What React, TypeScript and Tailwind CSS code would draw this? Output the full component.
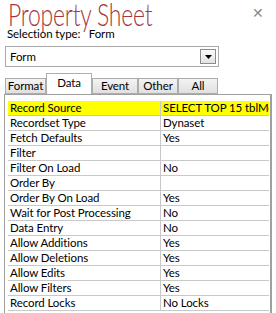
import React from "react";

const rows: [string, string][] = [
  ["Record Source", "SELECT TOP 15 tblMeta"],
  ["Recordset Type", "Dynaset"],
  ["Fetch Defaults", "Yes"],
  ["Filter", ""],
  ["Filter On Load", "No"],
  ["Order By", ""],
  ["Order By On Load", "Yes"],
  ["Wait for Post Processing", "No"],
  ["Data Entry", "No"],
  ["Allow Additions", "Yes"],
  ["Allow Deletions", "Yes"],
  ["Allow Edits", "Yes"],
  ["Allow Filters", "Yes"],
  ["Record Locks", "No Locks"],
];

const tabs = ["Format", "Data", "Event", "Other", "All"];
const tabWidths = ["w-[41px]", "w-[46px]", "w-[46px]", "w-[40px]", "w-[40px]"];

export default function App() {
  return (
    <div className="w-[276px] h-[313px] bg-white overflow-hidden relative font-['Lato',sans-serif] text-[11.5px] tracking-[-0.1px] text-black">
      {/* Header */}
      <div className="flex items-start justify-between pl-[8px] pr-[12px] h-[26px]">
        <h1 className="text-[31px] leading-[29px] font-light text-[#a4373a] tracking-[-0.3px] origin-left scale-x-[0.74] whitespace-nowrap">
          Property Sheet
        </h1>
        <span className="text-[#8a8a8a] text-[14px] leading-none mt-[6px]">✕</span>
      </div>
      <div className="pl-[7px] leading-[14px] pt-[1px]">
        Selection type:&nbsp;&nbsp;&nbsp;Form
      </div>

      {/* Dropdown */}
      <div className="ml-[5px] mt-[5px] w-[214px] h-[21px] border border-[#a9a9a9] flex items-center justify-between pl-[4px] pr-[2px]">
        <span className="leading-none">Form</span>
        <div className="w-[16px] h-[15px] border border-[#8c8c8c] bg-gradient-to-b from-[#fafafa] to-[#e2e2e2] flex items-center justify-center">
          <svg width="7" height="4" viewBox="0 0 7 4">
            <path d="M0 0h7L3.5 4z" fill="#000" />
          </svg>
        </div>
      </div>

      {/* Tabs */}
      <div className="flex items-end ml-[5px] mt-[6px] h-[21px]">
        {tabs.map((t, i) =>
          t === "Data" ? (
            <div key={t} className={`${tabWidths[i]} h-[21px] bg-white border border-b-0 border-[#adadad] flex items-start justify-center pt-[1px] leading-[16px]`}>
              {t}
            </div>
          ) : (
            <div key={t} className={`${tabWidths[i]} h-[16px] bg-gradient-to-b from-[#f3f3f3] to-[#e0e0e0] border border-[#adadad] flex items-center justify-center leading-none`}>
              {t}
            </div>
          )
        )}
      </div>

      {/* Property grid */}
      <div className="ml-[4px] w-[268px] border border-[#a0a0a0] border-r-2 pt-[6px] pl-[3px] pr-[1px] h-[230px]">
        {rows.map(([k, v], i) => (
          <div key={k} className={`flex h-[15px] border-b border-[#c8c8c8] leading-[14px] ${i === 0 ? "bg-[#ffff00]" : ""}`}>
            <div className="w-[153px] pl-[2px] border-r border-[#c8c8c8] whitespace-nowrap overflow-hidden">{k}</div>
            <div className="flex-1 pl-[2px] whitespace-nowrap overflow-hidden">{v}</div>
          </div>
        ))}
      </div>
    </div>
  );
}
